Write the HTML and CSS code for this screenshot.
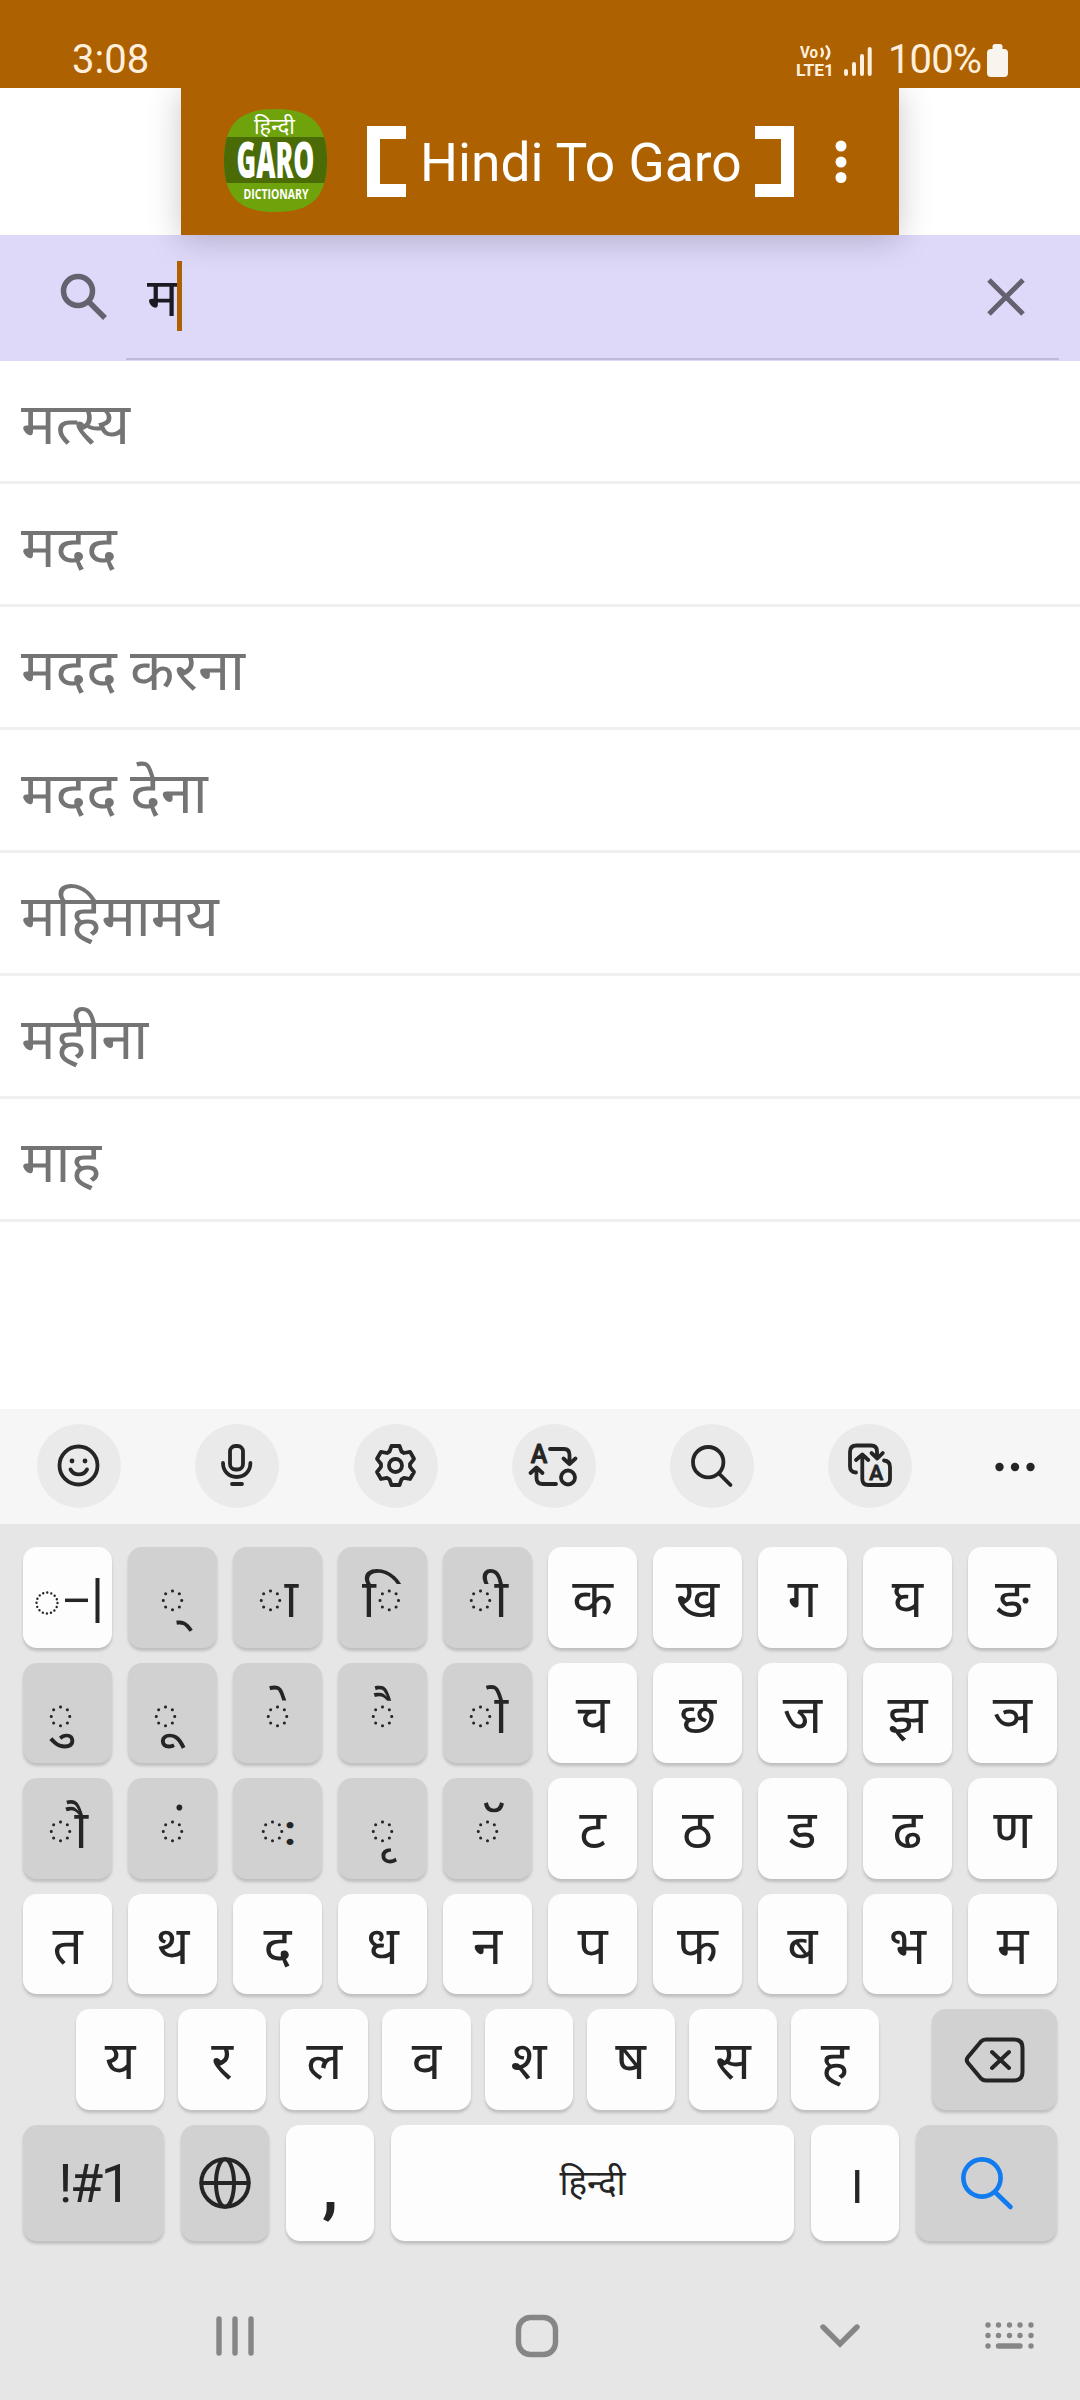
FILE: index.html
```html
<!doctype html>
<html lang="hi"><head>
<meta charset="utf-8" />
<meta name="viewport" content="width=device-width" />
<title>Hindi To Garo</title>
<link rel="stylesheet" href="styles.css"></head><body>
<div class="status">
	<span class="time">3:08</span>
	<svg class="volte" width="40" height="36" viewBox="0 0 40 36">
		<text x="4" y="15" textLength="18" lengthAdjust="spacingAndGlyphs">Vo</text>
		<text x="0" y="32.500" textLength="38" lengthAdjust="spacingAndGlyphs">LTE1</text>
		<path d="M25 5q3.500 4.500 0 9M30 2.500q6.500 7 0 14" />
	</svg>
	<svg class="signal" width="28" height="32" viewBox="0 0 28 32">
		<path d="M2 26v3M10 19v10M18 11v18M25.700 4v25" />
	</svg>
	<span class="percent">100%</span>
	<svg class="battery" width="22" height="34" viewBox="0 0 22 34">
		<rect x="5.500" width="10" height="10" rx="2.500" /><rect y="5" width="21" height="28" rx="4" />
	</svg>
</div>
<div class="header">
	<div class="appbar">
		<svg class="logo" width="103" height="103" viewBox="0 0 103 103">
			<clipPath id="squircle"><path d="M51.500 0C88 0 103 15 103 51.500S88 103 51.500 103 0 88 0 51.500 15 0 51.500 0z" /></clipPath>
			<g clip-path="url(#squircle)">
				<rect width="103" height="103" fill="#6fa30c" /><rect y="28" width="103" height="46" fill="#4a6b06" />
			</g>
			<text class="hi" x="30" y="24.500" textLength="41" lengthAdjust="spacingAndGlyphs">हिन्दी</text>
			<text class="garo" x="12.500" y="69" textLength="78" lengthAdjust="spacingAndGlyphs">GARO</text>
			<text class="dict" x="19.500" y="89.500" textLength="65" lengthAdjust="spacingAndGlyphs">DICTIONARY</text>
		</svg>
		<i class="bracket left"></i>
		<span class="title">Hindi To Garo</span>
		<i class="bracket right"></i>
		<svg class="more" width="12" height="44" viewBox="0 0 12 44">
			<circle cx="6" cy="6" r="5.500" /><circle cx="6" cy="22" r="5.500" /><circle cx="6" cy="37.500" r="5.500" />
		</svg>
	</div>
</div>
<div class="search">
	<svg class="glass" width="48" height="48" viewBox="0 0 48 48">
		<circle cx="18" cy="18" r="14.500" /><path d="M28 28l17 17" />
	</svg>
	<div class="field">
		<span class="query">म</span><i class="caret"></i>
		<svg class="clear" width="38" height="38" viewBox="0 0 38 38"><path d="M2 2l34 34M36 2L2 36" /></svg>
	</div>
</div>
<div class="list">
	<div>मत्स्य</div>
	<div>मदद</div>
	<div>मदद करना</div>
	<div>मदद देना</div>
	<div>महिमामय</div>
	<div>महीना</div>
	<div>माह</div>
</div>
<div class="tools">
	<svg class="tool" viewBox="0 0 84 84">
		<circle cx="41.500" cy="41.500" r="19" /><path d="M33.500 45.500c3.500 6.500 13 6.500 16.500 0" />
		<circle class="dot" cx="35" cy="37" r="2.400" /><circle class="dot" cx="48" cy="37" r="2.400" />
	</svg>
	<svg class="tool" viewBox="0 0 84 84">
		<rect x="35" y="22" width="13" height="23.500" rx="5.500" /><path d="M28 39c0 8.500 6 14 13.700 14s13.700-5.500 13.700-14M37 60h10" />
	</svg>
	<svg class="tool" viewBox="0 0 84 84">
		<path d="M37.500 22h8l2 5.500 2.500 1.500 6-1.200 4 7-4 5.200v2.800l4 5.200-4 7-6-1.200-2.500 1.500-2 5.700h-8l-2-5.700-2.500-1.500-6 1.200-4-7 4-5.200v-2.800l-4-5.200 4-7 6 1.200 2.500-1.500z" />
		<circle cx="41.500" cy="41.500" r="6.500" />
	</svg>
	<svg class="tool" viewBox="0 0 84 84">
		<text x="18.700" y="39" font-size="25">A</text>
		<path d="M38 25h14q5.500 0 5.500 6v9M51.500 34.500l6 5.500 6-5.500M18.500 49l6-5.500 6 5.500M24.500 44v10q0 6 6 6H44" />
		<circle cx="56" cy="53.500" r="7" />
	</svg>
	<svg class="tool" viewBox="0 0 84 84">
		<circle cx="38.200" cy="38.200" r="15.200" /><path d="M49.500 50l11 11" />
	</svg>
	<svg class="tool" viewBox="0 0 84 84">
		<path d="M28 48.500q-6-.5-6-6V28q0-6.500 6.500-6.500h14.500q6 0 6 6V34M43.500 29l5.800 5.500 5.500-5.500M28 36l6.300-5.500 6 5.500M34.300 31v24q0 6 6 6h15.700q6 0 6-6V43q0-6-6-6.500" />
		<text x="41.200" y="55.500" font-size="21">A</text>
	</svg>
	<svg class="dots" width="56" height="84" viewBox="0 0 56 84">
		<circle cx="12.500" cy="43" r="4.200" /><circle cx="28" cy="43" r="4.200" /><circle cx="43.500" cy="43" r="4.200" />
	</svg>
</div>
<div class="keyboard">
	<div class="row">
		<b class="ic">
			<svg class="halant" width="58" height="46" viewBox="0 0 58 46">
				<circle cx="12" cy="25" r="10.500" /><path class="dash" d="M30 22.300h23" /><path class="bar" d="M62.500 0v45" />
			</svg>
		</b><b class="alt">&#x25cc;&#x94d;</b><b class="alt">&#x25cc;&#x93e;</b><b class="alt">&#x25cc;&#x93f;</b><b class="alt">&#x25cc;&#x940;</b>
		<b>क</b><b>ख</b><b>ग</b><b>घ</b><b>ङ</b>
	</div>
	<div class="row short">
		<b class="alt under">&#x25cc;&#x941;</b><b class="alt under">&#x25cc;&#x942;</b><b class="alt">&#x25cc;&#x947;</b><b class="alt">&#x25cc;&#x948;</b><b class="alt">&#x25cc;&#x94b;</b>
		<b>च</b><b>छ</b><b>ज</b><b>झ</b><b>ञ</b>
	</div>
	<div class="row">
		<b class="alt">&#x25cc;&#x94c;</b><b class="alt">&#x25cc;&#x902;</b><b class="alt">&#x25cc;<span class="visarga">:</span></b><b class="alt">&#x25cc;&#x943;</b><b class="alt">&#x25cc;&#x945;</b>
		<b>ट</b><b>ठ</b><b>ड</b><b>ढ</b><b>ण</b>
	</div>
	<div class="row short">
		<b>त</b><b>थ</b><b>द</b><b>ध</b><b>न</b><b>प</b><b>फ</b><b>ब</b><b>भ</b><b>म</b>
	</div>
	<div class="row inset">
		<b>य</b><b>र</b><b>ल</b><b>व</b><b>श</b><b>ष</b><b>स</b><b>ह</b>
		<b class="alt back ic">
			<svg width="60" height="46" viewBox="0 0 60 46">
				<path d="M21 2.500h28q8.500 0 8.500 8.500v24q0 8.500-8.500 8.500H21q-3 0-5-2L3 26q-2.500-3 0-6L16 4.500q2-2 5-2zM27 15l17 16M44 15L27 31" />
			</svg>
		</b>
	</div>
	<div class="row bottom">
		<b class="alt wide latin">!#1</b>
		<b class="alt ic">
			<svg class="globe" width="52" height="52" viewBox="0 0 52 52">
				<circle cx="26" cy="26" r="23.700" /><ellipse cx="26" cy="26" rx="9" ry="23.700" /><path d="M2.500 26h47" />
			</svg>
		</b>
		<b class="comma">,</b>
		<b class="space">हिन्दी</b>
		<b class="danda">।</b>
		<b class="alt wide ic">
			<svg class="go" width="52" height="52" viewBox="0 0 52 52"><circle cx="21" cy="21" r="18.600" /><path d="M34.500 35.500L49.500 50" /></svg>
		</b>
	</div>
</div>
<div class="nav">
	<svg width="38" height="42" viewBox="0 0 38 42"><path d="M3 4v34M19 4v34M35 4v34" /></svg>
	<svg width="42" height="42" viewBox="0 0 42 42"><rect x="2.500" y="2.500" width="37" height="37" rx="12" /></svg>
	<svg width="40" height="26" viewBox="0 0 40 26"><path d="M3 4l17 17L37 4" /></svg>
	<svg width="49" height="28" viewBox="0 0 49 28">
		<path d="M3 3h0M13.500 3h0M24.500 3h0M35 3h0M46 3h0M3 13.500h0M13.500 13.500h0M24.500 13.500h0M35 13.500h0M46 13.500h0M3 24h0M13.500 24h21.500M46 24h0" />
	</svg>
</div>
</body></html>
```
FILE: styles.css
```css
*{ box-sizing: border-box }
body{ --brown: #ad6100; --hindi: "Noto Sans Devanagari", "Noto Sans", sans-serif; margin: 0; width: 1080px; background: #fff; font-family: Roboto, sans-serif }
svg{ display: block; fill: none; flex: none; overflow: visible }
.status{ position: relative; z-index: 2; display: flex; height: 88px; padding: 32px 71px 0 72px; background: var(--brown); color: #ffefdc; font-size: 40px; line-height: 56px }
.status text{ font: bold 16.5px Roboto, sans-serif; fill: #ffefdc }
.volte{ margin: 11px 0 0 auto }
.volte path{ stroke: #ffefdc; stroke-width: 2.5 }
.signal{ margin: 13px 0 0 8px }
.signal path{ stroke: #ffefdc; stroke-width: 4; stroke-linecap: round }
.percent{ width: 93px; margin-left: 16px; white-space: nowrap; letter-spacing: -.9px }
.battery{ margin: 12px 0 0 6px; fill: #f9f4ed }
.header{ height: 147px; padding: 0 181px }
.appbar{ position: relative; z-index: 1; display: flex; align-items: center; height: 147px; padding: 0 52px 0 43px; background: var(--brown); box-shadow: 0 3px 32px rgba(0, 0, 0, .22) }
.logo{ margin-top: -2px }
.logo text{ fill: #fff }
.logo .hi{ font: 22px var(--hindi) }
.logo .garo{ font: 800 49px "Open Sans", sans-serif }
.logo .dict{ font: bold 14.5px "Open Sans", sans-serif }
.bracket{ width: 39px; height: 71px; border: 13px solid #fff }
.left{ margin-left: 40px; border-right: 0 }
.right{ margin-left: auto; border-left: 0 }
.title{ margin: 3px 0 0 14px; color: #fff; font-size: 53.3px; white-space: nowrap }
.more{ margin-left: 41px; fill: #fff }
.search{ display: flex; height: 126px; padding: 0 21px 1px 60px; background: #ded8f9 }
.search svg{ stroke: #65616f; stroke-width: 5.5 }
.glass{ margin-top: 38px }
.field{ flex: 1; display: flex; margin-left: 18px; padding: 26px 34px 0 21px; border-bottom: 2px solid #bfbad8 }
.query{ padding-top: 7px; font: 52.5px/70px var(--hindi); color: #1c1922 }
.caret{ width: 5px; height: 70px; margin-left: -1px; background: var(--brown) }
.search .clear{ margin: 17px 0 0 auto; stroke-width: 5 }
.list{ height: 1048px }
.list div{ height: 123px; padding: 7px 0 0 21px; border-bottom: 3px solid #f0f0f0; color: #747474; font: 57.8px/124px var(--hindi); word-spacing: -2px }
.tools{ display: flex; gap: 74.3px; height: 115px; padding: 15px 0 0 37px; background: #f6f6f6 }
.tool{ width: 84px; height: 84px; border-radius: 50%; background: #eaeaea; stroke: #252525; stroke-width: 3.8; stroke-linecap: round; stroke-linejoin: round }
.tool text{ font-family: Roboto, sans-serif; font-weight: 500; fill: #252525; stroke-width: .9 }
.tool .dot, .dots{ fill: #252525; stroke: none }
.keyboard{ display: flex; flex-direction: column; gap: 15px; height: 717px; padding: 23px 23px 0; background: #e6e6e6 }
.row{ display: flex; gap: 16px; height: 101px }
.row b{ flex: 1 1 0; display: flex; justify-content: center; align-items: center; padding-top: 15px; border-radius: 14px; background: #fdfdfd; box-shadow: 0 3px 3px rgba(0, 0, 0, .17); color: #252525; font: 53px/86px var(--hindi); white-space: nowrap }
.row .alt{ background: #d1d1d1 }
.row .ic{ padding: 0 }
.row .under{ text-indent: -14px }
.visarga{ position: relative; top: -6px; margin-left: -2px; font: bold 43px Roboto, sans-serif }
.short{ height: 100px }
.row svg{ stroke: #252525; stroke-width: 4; stroke-linecap: round; stroke-linejoin: round }
.row .halant{ margin: 6px 8px 0 0; stroke-linecap: butt }
.halant circle{ stroke-width: 2.4; stroke-linecap: round; stroke-dasharray: 0 4.12 }
.halant .dash{ stroke-width: 3.5 }
.inset{ gap: 14px; padding-left: 53px }
.row .back{ flex: none; width: 125px; margin-left: 39px }
.bottom{ gap: 17px; height: 116px }
.bottom b{ flex: none; width: 88px }
.bottom .wide{ width: 141px }
.bottom .space{ flex: 1; padding-top: 7px; font-size: 35px }
.row .latin{ padding: 0; font: 54px Roboto, sans-serif; letter-spacing: -2.5px }
.row .comma{ padding-top: 8px; font: bold 66px Roboto, sans-serif }
.row .go{ stroke: #117bef; stroke-width: 4.6 }
.nav{ display: flex; align-items: center; height: 159px; padding: 30px 0 0 216px; background: #e6e6e6 }
.nav svg{ stroke: #868686; stroke-width: 5.4; stroke-linecap: round }
.nav svg + svg{ margin-left: 262px }
.nav svg:last-child{ margin-left: 125px }
```
